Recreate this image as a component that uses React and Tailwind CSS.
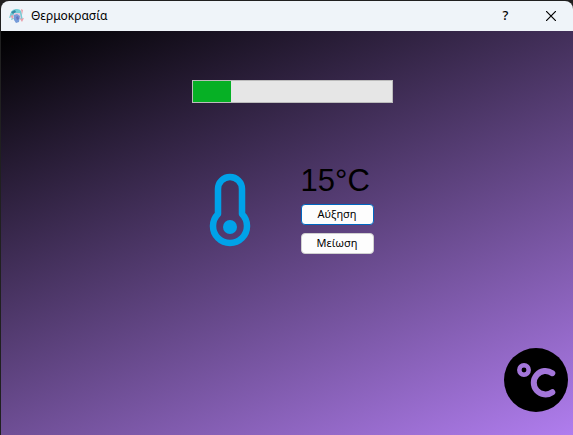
export default function App() {
  return (
    <main className="flex h-screen flex-col overflow-hidden bg-[#202020] pt-px pl-px font-['Noto_Sans',sans-serif] text-black">
      <header className="flex h-[30px] shrink-0 items-center rounded-t-lg bg-[#eff4f9] pl-2">
        <svg className="size-4" viewBox="0 0 16 16" aria-hidden="true">
          <path d="M1 7C2 3 4 1 8 1c4 0 5 3 5 7l1 4-3-1H5l-3 1 1-3-3 1z" fill="#74cdd6" />
          <path d="M2 4l4-2 1 2-3 2z" fill="#348ba5" />
          <path d="M5 5h6l1 5-4 3-4-3z" fill="#e7c9dc" />
          <path d="M5 7l3-1 3 2-1 6-3 1-2-3z" fill="#759bd9" />
          <path d="M1 8l3-1 0 4zM12 1l2 1-1 5zM11 11l4-1-2 4z" fill="#e99faa" />
          <path d="M7 9l2-1 1 3-2 1z" fill="#6673bd" />
        </svg>
        <h1 className="ml-1.5 text-xs">Θερμοκρασία</h1>
        <div className="ml-auto flex h-full">
          <button type="button" aria-label="Help" className="flex w-[45px] items-center justify-center text-[13px] font-medium">?</button>
          <button type="button" aria-label="Close" className="flex w-[45px] items-center justify-center">
            <svg className="size-2.5" viewBox="0 0 10 10" stroke="currentColor" strokeWidth="1.2" aria-hidden="true">
              <path d="M0 0l10 10M10 0L0 10" />
            </svg>
          </button>
        </div>
      </header>
      <section className="flex flex-1 flex-col bg-[linear-gradient(157deg,#000000,#b07dee)] pt-[49px]">
        <div
          role="progressbar"
          aria-label="Θερμοκρασία"
          aria-valuenow={15}
          aria-valuemin={-10}
          aria-valuemax={120}
          className="ml-2.5 h-[23px] w-[201px] self-center border border-[#bcbcbc] bg-[#e6e6e6]"
        >
          <div className="h-full w-[38px] bg-[#06b025]" />
        </div>
        <div className="mt-[60px] flex justify-center gap-12 pl-1.5">
          <svg className="mt-2.5 h-[76px] w-[46px]" viewBox="-1 0 46 76" fill="none" aria-hidden="true">
            <path d="M10 41V16a12 12 0 0 1 24 0v25a17 17 0 1 1-24 0z" stroke="#00a2e8" strokeWidth="6.5" strokeLinejoin="round" />
            <circle cx="22" cy="54" r="7" fill="#00a2e8" />
          </svg>
          <div className="flex w-[73px] flex-col">
            <output className="font-['Liberation_Sans',sans-serif] text-[31px] leading-9">15°C</output>
            <button type="button" className="mt-[5px] h-[21px] rounded-sm border border-[#0067c0] bg-[#fdfdfd] text-[11px]">Αύξηση</button>
            <button type="button" className="mt-2 h-[21px] rounded-sm border border-[#d0d0d0] bg-[#fdfdfd] text-[11px]">Μείωση</button>
          </div>
        </div>
        <svg className="mt-auto mr-[5px] mb-[23px] size-16 self-end" viewBox="0 0 64 64" fill="none" aria-label="°C" role="img">
          <circle cx="32" cy="32" r="32" fill="#000000" />
          <g stroke="#a376da" strokeLinecap="round">
            <circle cx="20" cy="22" r="4.7" strokeWidth="4.5" />
            <path d="M48.3 25.2a11.7 11.7 0 1 0 0 19" strokeWidth="6" />
          </g>
        </svg>
      </section>
    </main>
  )
}
